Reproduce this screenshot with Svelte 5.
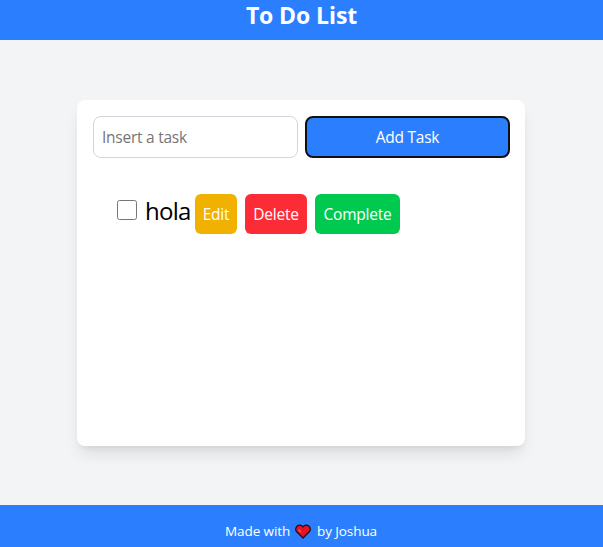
<script lang="ts">
    type Task = { id: number; text: string; done: boolean };

    let tasks = $state<Task[]>([{ id: 1, text: 'hola', done: false }]);
    let draft = $state('');

    function addTask() {
        const text = draft.trim();
        if (!text) return;
        tasks.push({ id: Date.now(), text, done: false });
        draft = '';
    }

    function editTask(task: Task) {
        draft = task.text;
        removeTask(task.id);
    }

    function removeTask(id: number) {
        tasks = tasks.filter((task) => task.id !== id);
    }
</script>

<div class="page">
    <header>
        <h1>To Do List</h1>
    </header>

    <main>
        <section class="card">
            <div class="form">
                <input class="field" type="text" placeholder="Insert a task" bind:value={draft} />
                <button class="add" onclick={addTask}>Add Task</button>
            </div>

            <ul>
                {#each tasks as task (task.id)}
                    <li>
                        <input class="check" type="checkbox" bind:checked={task.done} />
                        <span class="name" class:done={task.done}>{task.text}</span>
                        <div class="actions">
                            <button class="edit" onclick={() => editTask(task)}>Edit</button>
                            <button class="delete" onclick={() => removeTask(task.id)}>Delete</button>
                            <button class="complete" onclick={() => (task.done = true)}>Complete</button>
                        </div>
                    </li>
                {/each}
            </ul>
        </section>
    </main>

    <footer>
        <span class="made">Made with</span>
        <svg class="heart" viewBox="0 0 16 15" aria-hidden="true">
            <path
                d="M8 14 L1.7 7.8 C0.2 6.1 0.5 3.3 2.2 1.9 C4 .5 6.6 .9 8 3 C9.4 .9 12 .5 13.8 1.9 C15.5 3.3 15.8 6.1 14.3 7.8 Z"
                fill="#e81224"
                stroke="#1b1118"
                stroke-width="1.3"
                stroke-linejoin="round"
            />
            <path d="M3.6 5.6 L6 8" fill="none" stroke="#f4646c" stroke-width="1.1" />
        </svg>
        <span class="by">by Joshua</span>
    </footer>
</div>

<style>
    :global(body) {
        margin: 0;
    }

    .page {
        display: flex;
        flex-direction: column;
        height: 100vh;
        overflow: hidden;
        background-color: #f3f4f6;
        font-family: 'Segoe UI', 'Open Sans', 'Noto Sans', sans-serif;
        font-size: 16px;
    }

    header {
        height: 40px;
        background-color: #2b7fff;
        color: #fff;
        text-align: center;
    }

    h1 {
        margin: 0;
        font-size: 23px;
        line-height: 30px;
        font-weight: 700;
        letter-spacing: -0.1px;
    }

    main {
        flex: 1;
        display: flex;
        justify-content: center;
        padding: 60px 1px 0 0;
    }

    .card {
        box-sizing: border-box;
        width: 448px;
        height: 346px;
        padding: 16px 15px 16px 16px;
        border-radius: 8px;
        background-color: #fff;
        box-shadow:
            0 10px 15px -3px rgba(0, 0, 0, 0.1),
            0 4px 6px -4px rgba(0, 0, 0, 0.1);
    }

    .form {
        display: grid;
        grid-template-columns: 1fr 1fr;
        gap: 7px;
        height: 42px;
    }

    .field,
    button {
        box-sizing: border-box;
        min-width: 0;
        margin: 0;
        font-family: inherit;
        font-size: 15.5px;
        letter-spacing: -0.25px;
    }

    .field {
        padding: 8px;
        border: 1px solid #d1d5dc;
        border-radius: 8px;
        outline: none;
    }

    .field::placeholder {
        color: #757575;
    }

    button {
        padding: 0;
        border: none;
        border-radius: 6px;
        color: #fff;
    }

    .add {
        border: 2px solid #101010;
        border-radius: 8px;
        background-color: #2b7fff;
    }

    ul {
        margin: 36px 0 0;
        padding: 0 0 0 24px;
        list-style: none;
    }

    li {
        display: flex;
        height: 40px;
    }

    .check {
        width: 20px;
        height: 20px;
        margin: 6px 8px 0 0;
    }

    .name {
        width: 50px;
        font-size: 24px;
        line-height: 34px;
        letter-spacing: -0.7px;
    }

    .done {
        text-decoration: line-through;
    }

    .actions {
        display: flex;
        gap: 8px;
    }

    .edit {
        width: 42px;
        background-color: #f0b100;
    }

    .delete {
        width: 62px;
        background-color: #fb2c36;
    }

    .complete {
        width: 85px;
        background-color: #00c950;
    }

    footer {
        display: flex;
        justify-content: center;
        align-items: center;
        box-sizing: border-box;
        height: 42px;
        padding: 10px 1px 0 0;
        background-color: #2b7fff;
        color: #fff;
        font-size: 13.5px;
        letter-spacing: -0.1px;
    }

    .heart {
        width: 16px;
        height: 15px;
        margin: 0 6px 0 5px;
    }
</style>
